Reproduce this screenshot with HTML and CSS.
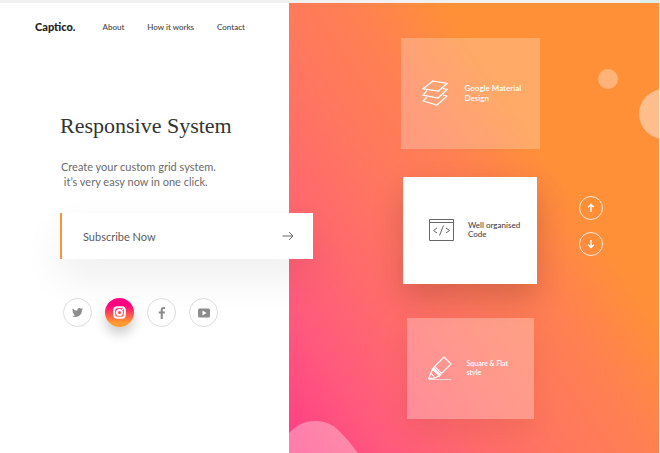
FILE: index.html
```html
<!DOCTYPE html>
<html lang="en">
<head>
<meta charset="utf-8">
<meta name="viewport" content="width=device-width, initial-scale=1">
<title>Captico</title>
<link rel="stylesheet" href="styles.css">
</head>
<body>
<div class="page">
  <div class="intro">
    <header class="header">
      <a class="logo" href="#">Captico.</a>
      <nav class="nav">
        <a href="#">About</a>
        <a href="#">How it works</a>
        <a href="#">Contact</a>
      </nav>
    </header>
    <main class="content">
      <h1 class="title">Responsive System</h1>
      <p class="lead">Create your custom grid system.<br>&nbsp;it’s very easy now in one click.</p>
      <button class="subscribe" type="button">
        <span>Subscribe Now</span>
        <svg width="12" height="10" viewBox="0 0 12 10" aria-hidden="true"><path d="M0.500 5H11M7 1l4 4-4 4"/></svg>
      </button>
      <div class="social">
        <a href="#" aria-label="Twitter"><svg width="11" height="11" viewBox="0 0 24 24" aria-hidden="true"><path d="M24 4.600a10 10 0 0 1-2.800.8 4.900 4.900 0 0 0 2.100-2.700 10 10 0 0 1-3.100 1.200 4.900 4.900 0 0 0-8.400 4.500A14 14 0 0 1 1.700 3.200a4.900 4.900 0 0 0 1.500 6.500 4.900 4.900 0 0 1-2.200-.6c0 2.300 1.600 4.400 3.900 4.900a5 5 0 0 1-2.200.1 4.900 4.900 0 0 0 4.600 3.400A9.900 9.900 0 0 1 0 19.500 14 14 0 0 0 21.500 7.100 10 10 0 0 0 24 4.600z"/></svg></a>
        <a class="active" href="#" aria-label="Instagram"><svg width="13" height="13" viewBox="0 0 13 13" aria-hidden="true"><rect x="1.200" y="1.200" width="10.600" height="10.600" rx="3"/><circle cx="6.500" cy="6.500" r="2.500"/><circle class="dot" cx="9.500" cy="3.500" r=".8"/></svg></a>
        <a href="#" aria-label="Facebook"><svg width="12" height="12" viewBox="0 0 12 12" aria-hidden="true"><path d="M4.700 12V6.500H2.800V4.500h1.900V3c0-1.900 1.100-3 2.800-3h1.600v1.900H8c-.9 0-1.200.4-1.200 1.200v1.400h2.200l-.3 2H6.800V12z"/></svg></a>
        <a href="#" aria-label="YouTube"><svg width="12" height="12" viewBox="0 0 12 12" aria-hidden="true"><path fill-rule="evenodd" d="M1.500 1.500h9A1.500 1.500 0 0 1 12 3v6a1.500 1.500 0 0 1-1.500 1.500h-9A1.500 1.500 0 0 1 0 9V3a1.500 1.500 0 0 1 1.500-1.500zM4.500 3.600v4.800L8.500 6z"/></svg></a>
      </div>
    </main>
  </div>
  <section class="showcase" aria-label="Features">
    <svg class="bubble bubble-small" viewBox="0 0 20 20" aria-hidden="true"><circle cx="10" cy="10" r="10"/></svg>
    <svg class="bubble bubble-large" viewBox="0 0 50 50" aria-hidden="true"><circle cx="25" cy="25" r="25"/></svg>
    <svg class="bubble bubble-blob" viewBox="0 0 69 32" aria-hidden="true"><path d="M0 12C8 4 15 0 26 0c13 0 20 5 28 14 6 6 10 12 15 18H0z"/></svg>
    <div class="cards">
      <article class="card card-top">
        <svg width="26" height="26" viewBox="0 0 26 26" aria-hidden="true"><path d="M11 1L25 3.500 16.500 11 1 8.800z"/><path d="M5 10.500l-4 4.500L16 18 25 9.500l-4-.8"/><path d="M5 17l-4 4L15 25l10-9-4-1"/></svg>
        <p>Google Material Design</p>
      </article>
      <article class="card card-active">
        <svg width="25" height="22" viewBox="0 0 25 22" aria-hidden="true"><path d="M.5.5h24v21H.5zM.5 3.500h24M8 9l-3.500 2.500L8 14M17 9l3.500 2.500L17 14M14.500 6.500l-4 10"/></svg>
        <p>Well organised Code</p>
      </article>
      <article class="card card-bottom">
        <svg width="24" height="24" viewBox="0 0 24 24" aria-hidden="true"><path d="M16 1l7 7-9.500 9.500-7-7zM6.500 10.500L4.500 13l7 7 2-2.500M4.500 13l-3.800 9.500L6.500 22l5-2M5.500 12l7 7M3 17l3.500 4.500"/><path class="thin" d="M1 23.500h22"/></svg>
        <p>Square &amp; Flat style</p>
      </article>
    </div>
    <div class="pager">
      <button type="button" aria-label="Previous"><svg width="8" height="10" viewBox="0 0 8 10" aria-hidden="true"><path d="M4 9V1.500M1.200 4.200L4 1.400l2.800 2.800"/></svg></button>
      <button type="button" aria-label="Next"><svg width="8" height="10" viewBox="0 0 8 10" aria-hidden="true"><path d="M4 1v7.500M1.200 5.800L4 8.600l2.800-2.800"/></svg></button>
    </div>
  </section>
</div>
</body>
</html>
```

FILE: styles.css
```css
* {
  box-sizing: border-box;
}

body {
  margin: 0;
  background: linear-gradient(#dceeea, #dceeea) 100% 0 / 20px 4px no-repeat #f1f1f1;
  color: #444;
  font-family: Lato, "Liberation Sans", sans-serif;
}

a {
  color: inherit;
  text-decoration: none;
}

h1,
p {
  margin: 0;
}

svg {
  flex: none;
}

.page {
  display: grid;
  grid-template-columns: 289fr 370fr;
  min-height: 100vh;
  padding: 3px 1px 0 0;
}

.intro {
  position: relative;
  z-index: 1;
  padding: 16px 0 24px;
  background: #fff;
}

.header {
  display: flex;
  align-items: center;
  gap: 27px;
  padding-left: 35px;
  line-height: 16px;
}

.logo {
  color: #222;
  font-size: 11px;
  font-weight: 900;
}

.nav {
  display: flex;
  gap: 23px;
  font-size: 8px;
  font-weight: 500;
  white-space: nowrap;
}

.content {
  padding: 75px 0 0 60px;
}

.title {
  color: #333;
  font-family: "Liberation Serif", serif;
  font-size: 22px;
  font-weight: 400;
  line-height: 32px;
  white-space: nowrap;
}

.lead {
  margin-top: 17px;
  padding-left: 1px;
  color: #6b6b6b;
  font-size: 11px;
  line-height: 15px;
}

.subscribe {
  display: flex;
  align-items: center;
  justify-content: space-between;
  width: calc(100% + 24px);
  height: 46px;
  margin-top: 24px;
  padding: 0 19px 0 21px;
  border: 0;
  border-left: 2px solid #ff9138;
  background: #fff;
  box-shadow: 0 18px 40px rgba(0, 0, 0, 0.07);
  color: #5c5c5c;
  font: inherit;
  font-size: 11px;
  cursor: pointer;
}

.subscribe svg {
  fill: none;
  stroke: #666;
}

.social {
  display: flex;
  gap: 13px;
  margin-top: 39px;
  padding-left: 3px;
}

.social a {
  display: grid;
  place-items: center;
  width: 29px;
  height: 29px;
  border: 1px solid #dcdcdc;
  border-radius: 50%;
  background: #fff;
}

.social svg {
  fill: #8c8c8e;
}

.social .active {
  border: 0;
  background: linear-gradient(#ff0080 25%, #ff9a2e 85%);
  box-shadow: 0 7px 12px rgba(0, 0, 0, 0.2);
}

.social .active svg {
  fill: none;
  stroke: #fff;
  stroke-width: 2;
}

.social .active .dot {
  fill: #fff;
  stroke: none;
}

.showcase {
  position: relative;
  display: grid;
  grid-template-columns: 1fr auto;
  align-items: center;
  overflow: hidden;
  background: linear-gradient(56deg, #ff3d85 0%, #ff5a7d 15%, #ff6a6c 28%, #ff785e 42%, #ff8052 54%, #ff9038 68%);
}

.bubble {
  position: absolute;
  fill: rgba(255, 255, 255, 0.32);
}

.bubble-small {
  top: 66px;
  right: 41px;
  width: 20px;
}

.bubble-large {
  top: 86px;
  right: -30px;
  width: 50px;
  fill: rgba(255, 255, 255, 0.42);
}

.bubble-blob {
  bottom: 0;
  left: 0;
  width: 69px;
}

.cards {
  display: flex;
  flex-direction: column;
  align-items: center;
  padding-left: 72px;
}

.card {
  display: flex;
  align-items: center;
  gap: 17px;
  width: 139px;
  height: 111px;
  padding: 0 15px 0 21px;
  background: rgba(255, 255, 255, 0.24);
  color: #fff;
  font-size: 8px;
  font-weight: 600;
  line-height: 10px;
}

.card svg {
  fill: none;
  stroke: currentColor;
  stroke-width: 1.2;
}

.card .thin {
  opacity: 0.6;
}

.card-active {
  width: 134px;
  height: 107px;
  margin: 28px 0 34px;
  padding: 0 12px 0 26px;
  gap: 14px;
  background: #fff;
  box-shadow: 0 14px 28px rgba(90, 30, 20, 0.24);
  color: #444;
  font-weight: 500;
  line-height: 9px;
}

.card-active svg {
  stroke: #666;
  stroke-width: 1;
}

.card-bottom {
  width: 127px;
  height: 101px;
  padding: 0 20px 0 21px;
  gap: 15px;
  background: rgba(255, 255, 255, 0.27);
  box-shadow: 0 12px 24px rgba(120, 40, 20, 0.1);
  font-size: 7px;
  line-height: 9px;
}

.pager {
  display: flex;
  flex-direction: column;
  gap: 12px;
  padding: 0 56px 4px 0;
}

.pager button {
  display: grid;
  place-items: center;
  width: 24px;
  height: 24px;
  padding: 0;
  border: 1px solid rgba(255, 255, 255, 0.8);
  border-radius: 50%;
  background: none;
  cursor: pointer;
}

.pager svg {
  fill: none;
  stroke: #fff;
  stroke-width: 1.4;
}
```
